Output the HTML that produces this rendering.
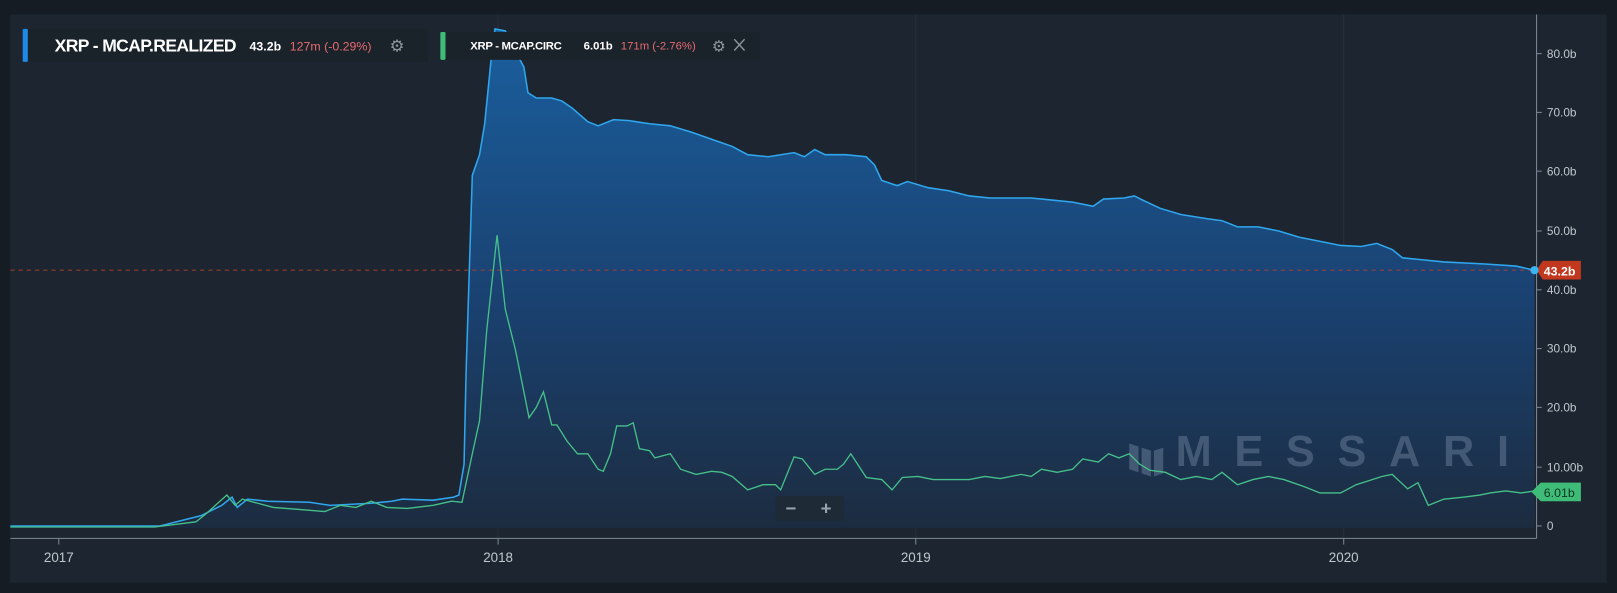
<!DOCTYPE html>
<html><head><meta charset="utf-8"><style>
html,body{margin:0;padding:0;background:#151c23;}
svg{display:block;}
text{font-family:"Liberation Sans",sans-serif;}
</style></head><body>
<svg width="1617" height="593" viewBox="0 0 1568 575" preserveAspectRatio="none" xmlns="http://www.w3.org/2000/svg">
<defs>
<linearGradient id="ga" x1="0" y1="0" x2="0" y2="1">
<stop offset="0" stop-color="#1a5f9e"/>
<stop offset="0.55" stop-color="#1a4170"/>
<stop offset="1" stop-color="#1c2c40"/>
</linearGradient>
</defs>
<rect width="1568" height="575" fill="#151c23"/>
<rect x="10" y="14" width="1548" height="551" fill="#1d2630"/>
<g stroke="#27313c" stroke-width="1">
<line x1="483" y1="14" x2="483" y2="522"/>
<line x1="888" y1="14" x2="888" y2="522"/>
<line x1="1303" y1="14" x2="1303" y2="522"/>
</g>
<path fill="url(#ga)" d="M10,510 L155,510 L195,500 L215,490 L225,482 L230,492 L240,484 L260,486 L300,487 L320,490 L360,488 L380,486 L390,484 L420,485 L440,482 L445,480 L450,450 L452,360 L458,170 L465,150 L470,120 L476,60 L480,28 L490,30 L500,50 L508,65 L512,90 L520,95 L535,95 L545,98 L555,105 L570,118 L580,122 L595,116 L610,117 L630,120 L650,122 L670,128 L690,135 L710,142 L725,150 L745,152 L770,148 L780,152 L790,145 L800,150 L820,150 L840,152 L848,160 L855,175 L870,180 L880,176 L900,182 L920,185 L940,190 L960,192 L1000,192 L1020,194 L1040,196 L1060,200 L1070,193 L1090,192 L1100,190 L1110,195 L1125,202 L1145,208 L1170,212 L1185,214 L1200,220 L1220,220 L1240,224 L1260,230 L1285,235 L1300,238 L1320,239 L1335,236 L1350,242 L1360,250 L1380,252 L1400,254 L1440,256 L1470,258 L1488,262 L1488,512 L10,512 Z"/>
<g fill="#6b7f9a" opacity="0.5">
<path d="M1095,430 L1104,433 L1104,458 L1095,455 Z M1107,434 L1116,437 L1116,462 L1107,459 Z M1119,437 L1128,434 L1128,459 L1119,462 Z"/>
<text x="1140" y="452" font-size="42" font-weight="bold" letter-spacing="22">MESSARI</text>
</g>
<line x1="10" y1="262" x2="1488" y2="262" stroke="#b4402c" stroke-width="1" stroke-dasharray="4,4" opacity="0.8"/>
<polyline fill="none" stroke="#2fa6ee" stroke-width="1.5" points="10,510 155,510 195,500 215,490 225,482 230,492 240,484 260,486 300,487 320,490 360,488 380,486 390,484 420,485 440,482 445,480 450,450 452,360 458,170 465,150 470,120 476,60 480,28 490,30 500,50 508,65 512,90 520,95 535,95 545,98 555,105 570,118 580,122 595,116 610,117 630,120 650,122 670,128 690,135 710,142 725,150 745,152 770,148 780,152 790,145 800,150 820,150 840,152 848,160 855,175 870,180 880,176 900,182 920,185 940,190 960,192 1000,192 1020,194 1040,196 1060,200 1070,193 1090,192 1100,190 1110,195 1125,202 1145,208 1170,212 1185,214 1200,220 1220,220 1240,224 1260,230 1285,235 1300,238 1320,239 1335,236 1350,242 1360,250 1380,252 1400,254 1440,256 1470,258 1488,262"/>
<polyline fill="none" stroke="#46c08a" stroke-width="1.3" points="10,511 150,511 190,506 200,498 220,480 228,490 235,484 250,488 265,492 290,494 315,496 330,490 345,492 360,486 375,492 395,493 420,490 438,486 448,487 458,440 465,408 472,320 482,228 490,300 500,340 508,380 513,405 520,395 527,380 535,412 540,412 550,428 560,440 570,440 580,455 585,457 592,440 598,413 608,413 614,410 620,435 630,437 635,444 650,440 660,455 675,460 690,457 700,458 710,462 725,475 740,470 752,470 757,475 770,443 778,445 790,460 800,455 812,455 818,450 825,440 840,463 855,465 865,475 875,463 890,462 905,465 940,465 955,462 970,464 990,460 1000,462 1010,455 1025,458 1040,455 1050,445 1065,448 1075,440 1085,444 1095,440 1105,450 1115,456 1130,458 1145,465 1160,462 1175,465 1185,458 1200,470 1215,465 1230,462 1245,465 1265,472 1280,478 1300,478 1315,470 1340,462 1350,460 1365,474 1375,468 1385,490 1400,484 1420,482 1435,480 1445,478 1460,476 1475,478 1488,476"/>
<line x1="1490" y1="14" x2="1490" y2="522" stroke="#7d8893" stroke-width="1"/>
<line x1="10" y1="522" x2="1490" y2="522" stroke="#7d8893" stroke-width="1"/>
<g stroke="#7d8893"><line x1="57" y1="522" x2="57" y2="528"/><line x1="483" y1="522" x2="483" y2="528"/><line x1="888" y1="522" x2="888" y2="528"/><line x1="1303" y1="522" x2="1303" y2="528"/></g>
<g fill="#c0c7ce" font-size="13">
<text x="57" y="545" text-anchor="middle">2017</text>
<text x="483" y="545" text-anchor="middle">2018</text>
<text x="888" y="545" text-anchor="middle">2019</text>
<text x="1303" y="545" text-anchor="middle">2020</text>
</g>
<g fill="#c0c7ce" font-size="11.5">
<text x="1500" y="56">80.0b</text>
<text x="1500" y="113">70.0b</text>
<text x="1500" y="170">60.0b</text>
<text x="1500" y="228">50.0b</text>
<text x="1500" y="285">40.0b</text>
<text x="1500" y="342">30.0b</text>
<text x="1500" y="399">20.0b</text>
<text x="1500" y="457">10.00b</text>
<text x="1500" y="514">0</text>
</g>
<g stroke="#7d8893"><line x1="1490" y1="52" x2="1495" y2="52"/><line x1="1490" y1="109" x2="1495" y2="109"/><line x1="1490" y1="166" x2="1495" y2="166"/><line x1="1490" y1="224" x2="1495" y2="224"/><line x1="1490" y1="281" x2="1495" y2="281"/><line x1="1490" y1="338" x2="1495" y2="338"/><line x1="1490" y1="395" x2="1495" y2="395"/><line x1="1490" y1="453" x2="1495" y2="453"/><line x1="1490" y1="510" x2="1495" y2="510"/></g>
<path d="M1490,262 L1496,253 L1533,253 L1533,271 L1496,271 Z" fill="#c2381f"/>
<text x="1497" y="267" fill="#fff" font-size="12" font-weight="bold">43.2b</text>
<circle cx="1488" cy="262" r="4" fill="#3bb4f0"/>
<path d="M1485,477 L1494,468 L1533,468 L1533,486 L1494,486 Z" fill="#3fbd78"/>
<text x="1497" y="482" fill="#11351f" font-size="12">6.01b</text>
<rect x="752" y="481" width="66" height="24" fill="#1e2a36"/>
<text x="767" y="499" fill="#9aa3ad" font-size="18" font-weight="bold" text-anchor="middle">−</text>
<text x="801" y="499" fill="#9aa3ad" font-size="18" font-weight="bold" text-anchor="middle">+</text>
<rect x="22" y="28" width="393" height="32" fill="#1a222a"/>
<rect x="22" y="28" width="5" height="32" rx="1" fill="#1e88e5"/>
<text x="53" y="50" fill="#fff" font-size="17" font-weight="bold" letter-spacing="-0.6">XRP - MCAP.REALIZED</text>
<text x="242" y="49" fill="#fff" font-size="12" font-weight="bold">43.2b</text>
<text x="281" y="49" fill="#e86a70" font-size="12">127m  (-0.29%)</text>
<text x="385" y="50" fill="#8d959d" font-size="16" text-anchor="middle">⚙</text>
<rect x="427" y="31" width="310" height="27" fill="#1a222a"/>
<rect x="427" y="31" width="5" height="27" rx="1" fill="#3fbd78"/>
<text x="456" y="48" fill="#fff" font-size="11" font-weight="bold" letter-spacing="-0.3">XRP - MCAP.CIRC</text>
<text x="566" y="48" fill="#fff" font-size="11" font-weight="bold">6.01b</text>
<text x="602" y="48" fill="#e86a70" font-size="11">171m (-2.76%)</text>
<text x="697" y="50" fill="#8d959d" font-size="15" text-anchor="middle">⚙</text>
<path d="M712,38 L722,49 M722,38 L712,49" stroke="#8d959d" stroke-width="1.4"/>
</svg>
</body></html>
